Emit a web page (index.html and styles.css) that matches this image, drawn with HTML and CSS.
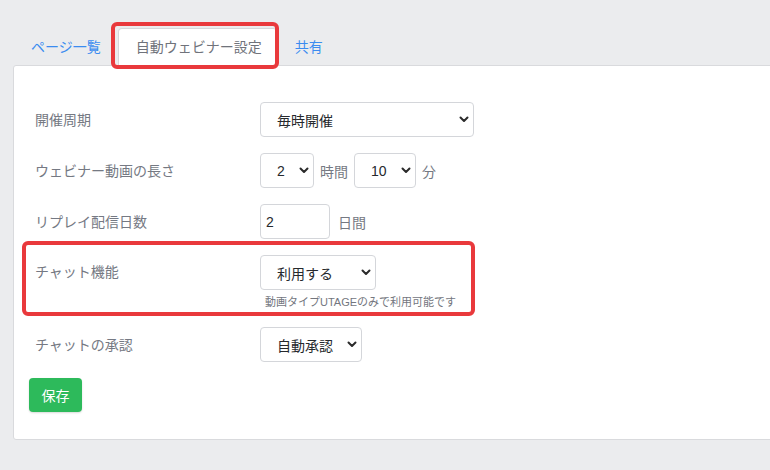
FILE: index.html
```html
<!DOCTYPE html>
<html lang="ja">
<head>
<meta charset="utf-8">
<link rel="stylesheet" href="styles.css">
</head>
<body>
<div class="page">
  <ul class="tabs">
    <li class="tab"><span class="tab-link">ページ一覧</span></li>
    <li class="tab active hl"><span class="tab-link">自動ウェビナー設定</span></li>
    <li class="tab"><span class="tab-link">共有</span></li>
  </ul>
  <div class="card">
    <div class="row">
      <div class="label">開催周期</div>
      <div class="controls">
        <div class="select w-cycle"><span>毎時開催</span><svg class="chev" width="10" height="7" viewBox="0 0 10 7"><path d="M1.5 1.5l3.5 3.5 3.5-3.5" fill="none" stroke="#2b2b2b" stroke-width="2" stroke-linecap="round" stroke-linejoin="round"/></svg></div>
      </div>
    </div>
    <div class="row">
      <div class="label">ウェビナー動画の長さ</div>
      <div class="controls">
        <div class="select w-hour"><span>2</span><svg class="chev" width="10" height="7" viewBox="0 0 10 7"><path d="M1.5 1.5l3.5 3.5 3.5-3.5" fill="none" stroke="#2b2b2b" stroke-width="2" stroke-linecap="round" stroke-linejoin="round"/></svg></div>
        <span class="unit">時間</span>
        <div class="select w-min"><span>10</span><svg class="chev" width="10" height="7" viewBox="0 0 10 7"><path d="M1.5 1.5l3.5 3.5 3.5-3.5" fill="none" stroke="#2b2b2b" stroke-width="2" stroke-linecap="round" stroke-linejoin="round"/></svg></div>
        <span class="unit">分</span>
      </div>
    </div>
    <div class="row">
      <div class="label">リプレイ配信日数</div>
      <div class="controls">
        <div class="input w-days">2</div>
        <span class="unit unit-wide">日間</span>
      </div>
    </div>
    <div class="row row-top hl-row">
      <div class="label label-top">チャット機能</div>
      <div class="controls col">
        <div class="select w-chat"><span>利用する</span><svg class="chev" width="10" height="7" viewBox="0 0 10 7"><path d="M1.5 1.5l3.5 3.5 3.5-3.5" fill="none" stroke="#2b2b2b" stroke-width="2" stroke-linecap="round" stroke-linejoin="round"/></svg></div>
        <div class="help">動画タイプUTAGEのみで利用可能です</div>
      </div>
    </div>
    <div class="row">
      <div class="label">チャットの承認</div>
      <div class="controls">
        <div class="select w-approve"><span>自動承認</span><svg class="chev" width="10" height="7" viewBox="0 0 10 7"><path d="M1.5 1.5l3.5 3.5 3.5-3.5" fill="none" stroke="#2b2b2b" stroke-width="2" stroke-linecap="round" stroke-linejoin="round"/></svg></div>
      </div>
    </div>
    <div class="actions">
      <button class="btn-save">保存</button>
    </div>
  </div>
</div>
</body>
</html>
```
FILE: styles.css
```css
*, *::before, *::after { box-sizing: border-box; }
html, body {
  margin: 0;
  padding: 0;
  background: #ebecee;
  overflow: hidden;
  width: 770px;
  height: 470px;
}
body {
  font-family: "Liberation Sans", "Noto Sans CJK JP", sans-serif;
  font-size: 14px;
  color: #212529;
}
.page {
  width: 800px;
  padding: 28px 0 0 13px;
}
.tabs {
  list-style: none;
  margin: 0;
  padding: 0;
  display: flex;
  position: relative;
  z-index: 1;
  margin-bottom: -1px;
}
.tab {
  position: relative;
}
.tab-link {
  display: block;
  padding: 8px 16px 8px 17px;
  line-height: 20px;
  height: 38px;
  color: #3b8cf0;
  border: 1px solid transparent;
  border-radius: 4px 4px 0 0;
}
.tab.active .tab-link {
  color: #70737b;
  background: #fff;
  border-color: #d6d7da #d6d7da #fff;
  padding-left: 17px;
  padding-right: 14px;
}
.hl::after {
  content: "";
  position: absolute;
  left: -7px;
  top: -6px;
  width: 168px;
  height: 47px;
  border: 4px solid #e9393c;
  border-radius: 6px;
  pointer-events: none;
}
.card {
  background: #fff;
  border: 1px solid #d9dadd;
  border-radius: 3px;
  padding: 36px 15px 27px 15px;
  display: flex;
  flex-direction: column;
  gap: 16px;
}
.row {
  display: flex;
  align-items: center;
  position: relative;
}
.row-top {
  align-items: flex-start;
}
.label {
  width: 231px;
  padding-left: 6px;
  color: #757983;
  line-height: 20px;
}
.label-top {
  padding-top: 7px;
}
.hl-row::after {
  content: "";
  position: absolute;
  left: -7px;
  top: -14px;
  width: 453px;
  height: 75px;
  border: 4px solid #e9393c;
  border-radius: 6px;
  pointer-events: none;
}
.controls {
  display: flex;
  align-items: center;
}
.controls.col {
  flex-direction: column;
  align-items: flex-start;
}
.select {
  height: 35px;
  border: 1px solid #d4d6da;
  border-radius: 4px;
  background: #fff;
  display: flex;
  align-items: center;
  justify-content: space-between;
  padding: 0 4px 0 16px;
  color: #26292d;
  font-size: 14px;
}
.chev {
  display: block;
}
.w-cycle { width: 214px; }
.w-hour { width: 54px; }
.w-min { width: 62px; }
.w-chat { width: 116px; }
.w-approve { width: 102px; }
.unit {
  color: #757983;
  margin: 0 6px;
}
.unit-wide {
  margin-left: 8px;
}
.input {
  width: 70px;
  height: 35px;
  border: 1px solid #d4d6da;
  border-radius: 4px;
  padding: 0 5px;
  display: flex;
  align-items: center;
  color: #26292d;
}
.help {
  font-size: 11px;
  color: #73767e;
  line-height: 17px;
  margin-top: 4px;
  padding-left: 5px;
}
.btn-save {
  font-family: inherit;
  font-size: 14px;
  font-weight: normal;
  color: #fff;
  background: #2dba5b;
  border: none;
  border-radius: 4px;
  width: 53px;
  height: 34px;
  padding: 0;
  box-shadow: 0 1px 2px rgba(0,0,0,0.15);
}
```
